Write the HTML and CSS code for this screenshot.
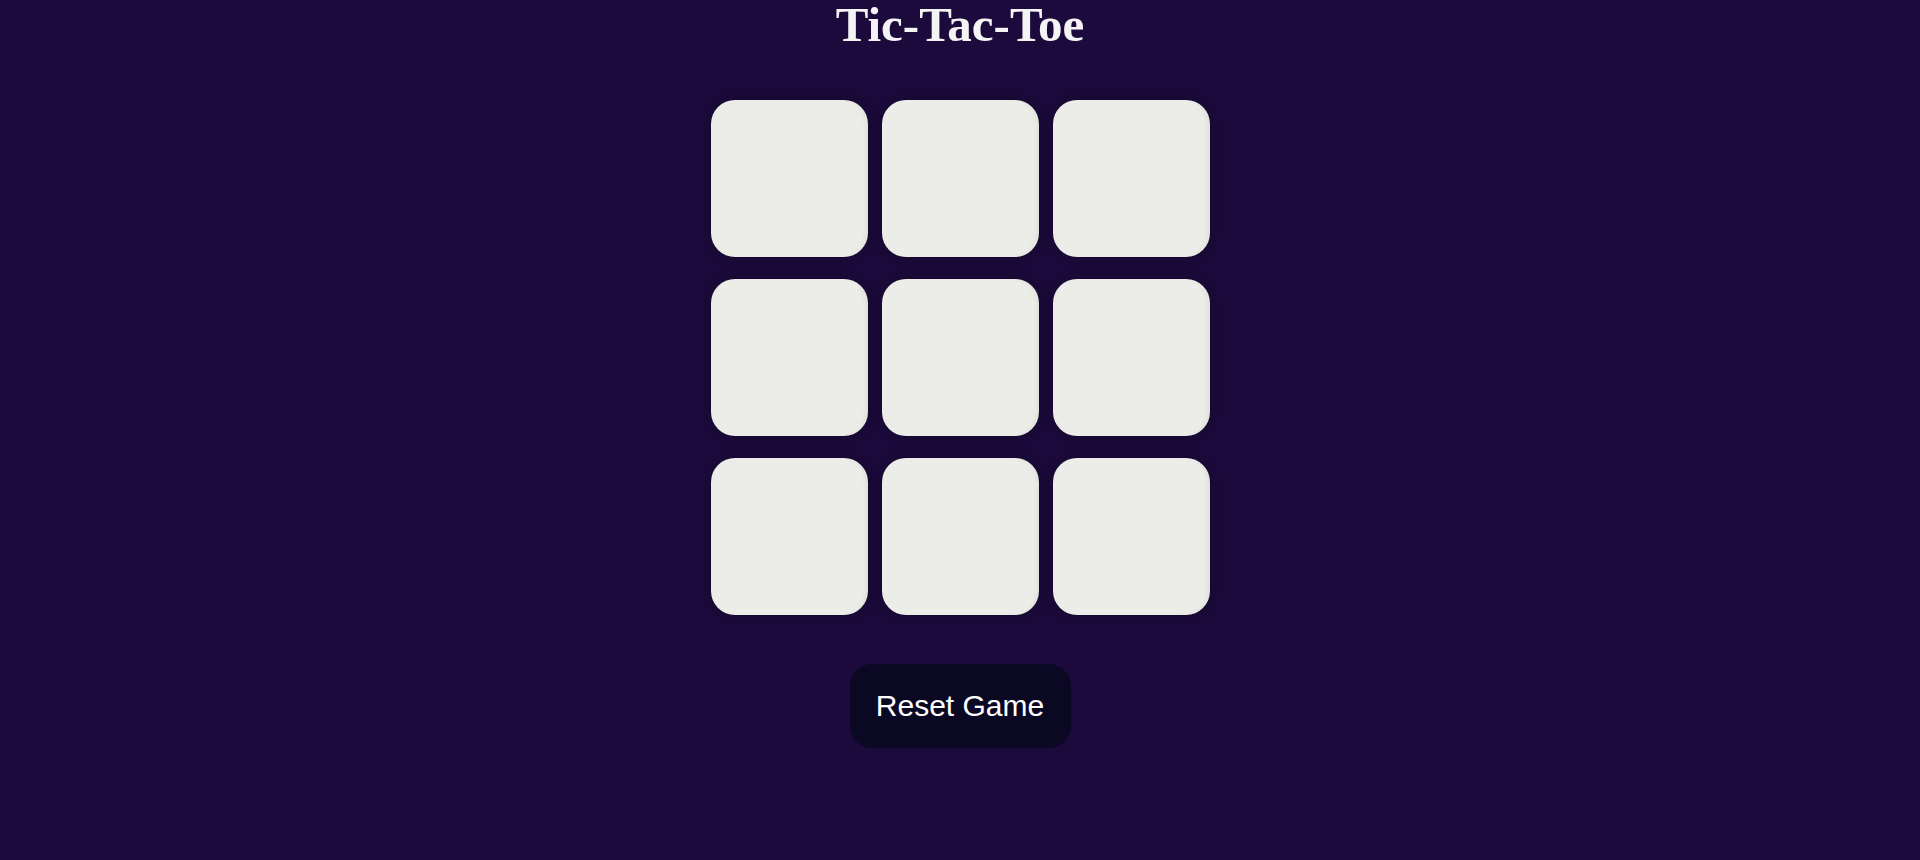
FILE: index.html
```html
<!DOCTYPE html>
<html lang="en">
<head>
<meta charset="utf-8">
<title>Tic-Tac-Toe</title>
<link rel="stylesheet" href="styles.css">
</head>
<body>
<main class="game">
  <h1 class="title">Tic-Tac-Toe</h1>
  <div class="board">
    <button class="cell"></button>
    <button class="cell"></button>
    <button class="cell"></button>
    <button class="cell"></button>
    <button class="cell"></button>
    <button class="cell"></button>
    <button class="cell"></button>
    <button class="cell"></button>
    <button class="cell"></button>
  </div>
  <button class="reset">Reset Game</button>
</main>
</body>
</html>
```

FILE: styles.css
```css
html, body {
  margin: 0;
  padding: 0;
  background: #1b0a3b;
  height: 100%;
}

.game {
  display: flex;
  flex-direction: column;
  align-items: center;
}

.title {
  margin: 0;
  font-family: "Liberation Serif", "Times New Roman", serif;
  font-weight: bold;
  font-size: 49px;
  line-height: 50px;
  color: #f4f4f4;
}

.board {
  margin-top: 50px;
  display: grid;
  grid-template-columns: repeat(3, 157px);
  grid-auto-rows: 157px;
  column-gap: 14px;
  row-gap: 22px;
  padding-left: 1px;
}

.cell {
  border: none;
  padding: 0;
  margin: 0;
  background: #ecece8;
  border-radius: 24px;
  box-shadow: 0 0 14px rgba(0, 0, 0, 0.28), inset -5px 0 6px -4px rgba(0, 0, 0, 0.08);
}

.reset {
  margin-top: 49px;
  width: 221px;
  height: 84px;
  border: none;
  border-radius: 22px;
  background: #0b0823;
  color: #ffffff;
  font-family: "Liberation Sans", Arial, sans-serif;
  font-size: 30px;
  padding: 0;
}
```
